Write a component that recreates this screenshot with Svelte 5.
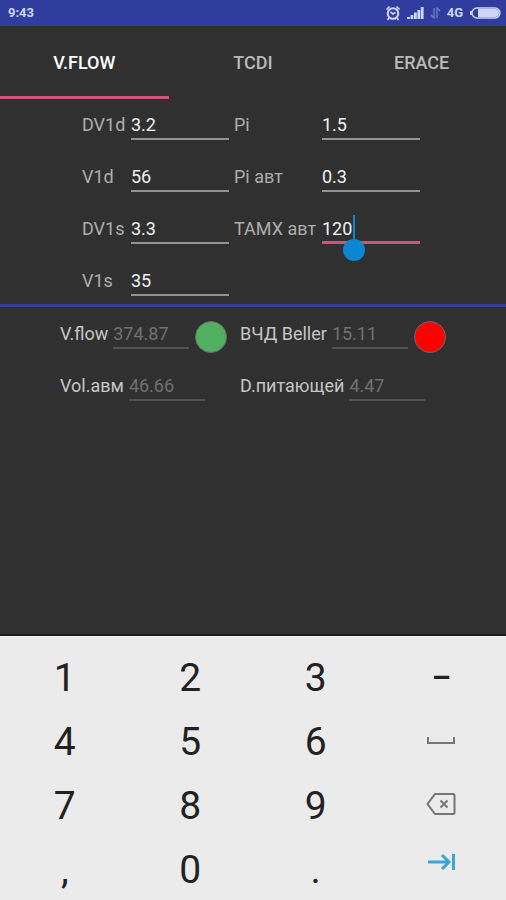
<script lang="ts">
	type Field = { id: string; label: string; value: string };
	type Result = Field & { status?: 'ok' | 'bad' };

	const tabs = ['V.FLOW', 'TCDI', 'ERACE'];

	const icons: Record<string, string> = {
		space: 'M2 10v6h26v-6',
		backspace: 'M9 3h18q1.5 0 1.5 1.5v17q0 1.5-1.5 1.5H9L1.5 13zM14.5 9.5l7 7M21.5 9.5l-7 7',
		next: 'M2 13h21M16 6l7 7-7 7M27.500 5v16'
	};

	const keys = ['1', '2', '3', '–', '4', '5', '6', 'space', '7', '8', '9', 'backspace', ',', '0', '.', 'next'];

	let activeTab = $state('V.FLOW');
	let activeField = $state('tamx');

	let fields: Field[] = $state([
		{ id: 'dv1d', label: 'DV1d', value: '3.2' },
		{ id: 'pi', label: 'Pi', value: '1.5' },
		{ id: 'v1d', label: 'V1d', value: '56' },
		{ id: 'pi-avt', label: 'Pi авт', value: '0.3' },
		{ id: 'dv1s', label: 'DV1s', value: '3.3' },
		{ id: 'tamx', label: 'TAMX авт', value: '120' },
		{ id: 'v1s', label: 'V1s', value: '35' }
	]);

	const results: Result[] = [
		{ id: 'vflow', label: 'V.flow', value: '374.87', status: 'ok' },
		{ id: 'beller', label: 'ВЧД Beller', value: '15.11', status: 'bad' },
		{ id: 'vol', label: 'Vol.авм', value: '46.66' },
		{ id: 'd-feed', label: 'D.питающей', value: '4.47' }
	];

	function press(key: string) {
		const index = fields.findIndex((f) => f.id === activeField);
		const field = fields[index];
		if (key === 'next') {
			activeField = fields[(index + 1) % fields.length].id;
		} else if (key === 'backspace') {
			field.value = field.value.slice(0, -1);
		} else {
			field.value += key === 'space' ? ' ' : key;
		}
	}
</script>

<div class="screen">
	<header class="status-bar">
		<span class="clock">9:43</span>
		<div class="status-icons">
			<svg width="16" height="16" viewBox="0 0 16 16" fill="none" stroke="currentColor" aria-hidden="true">
				<circle cx="8" cy="8.5" r="5.300" stroke-width="2" />
				<path d="M5.500 7l2.500 2 2.500-1.500M1.500 4.500l3-3M14.500 4.500l-3-3M4 13l-1.500 2M12 13l1.500 2" stroke-width="1.700" />
			</svg>
			<svg width="17" height="12" viewBox="0 0 17 12" fill="currentColor" aria-hidden="true">
				<path d="M0 10h3v2H0zM3.600 8h2.800v4H3.600zM7 5.500h2.800V12H7zM10.400 3h2.800v9h-2.800zM13.800 0h2.800v12h-2.800z" />
			</svg>
			<svg class="data" width="11" height="12" viewBox="0 0 11 12" fill="none" stroke="currentColor" aria-hidden="true">
				<path d="M4 1v10L1 8M7 11V1l3 3" stroke-width="1.400" />
			</svg>
			<span class="network">4G</span>
			<svg width="32" height="12" viewBox="0 0 32 12" aria-hidden="true">
				<rect x="3" y="1" width="28" height="10" rx="5" fill="none" stroke="currentColor" stroke-width="1.400" />
				<path d="M9 2h17a4 4 0 0 1 0 8H9z" fill="currentColor" />
				<path d="M2 4v4" stroke="currentColor" stroke-width="2" />
			</svg>
		</div>
	</header>

	<nav class="tabs">
		{#each tabs as tab}
			<button type="button" class="tab" class:active={activeTab === tab} onclick={() => (activeTab = tab)}>
				{tab}
			</button>
		{/each}
	</nav>

	<form class="fields">
		{#each fields as field (field.id)}
			<label for={field.id}>{field.label}</label>
			<div class="field" class:focused={activeField === field.id}>
				<input
					id={field.id}
					type="text"
					inputmode="none"
					bind:value={field.value}
					onfocus={() => (activeField = field.id)}
				/>
				{#if activeField === field.id}
					<div class="cursor" aria-hidden="true">
						<span class="ghost">{field.value}</span>
						<span class="caret"></span>
					</div>
				{/if}
			</div>
		{/each}
	</form>

	<section class="results">
		{#each results as result (result.id)}
			<div class="result">
				<label for={result.id}>{result.label}</label>
				<input id={result.id} type="text" value={result.value} disabled />
				{#if result.status}
					<span class="lamp {result.status}"></span>
				{/if}
			</div>
		{/each}
	</section>

	<div class="keypad">
		{#each keys as key}
			{#if icons[key]}
				<button type="button" class="key icon {key}" aria-label={key} onclick={() => press(key)}>
					<svg width="30" height="26" viewBox="0 0 30 26" fill="none" stroke="currentColor" aria-hidden="true">
						<path d={icons[key]} />
					</svg>
				</button>
			{:else}
				<button type="button" class="key" class:dash={key === '–'} onclick={() => press(key)}>{key}</button>
			{/if}
		{/each}
	</div>
</div>

<style>
	:global(body) {
		margin: 0;
		background: #303030;
	}

	.screen {
		display: flex;
		flex-direction: column;
		min-height: 100vh;
		background: #303030;
		font-family: Roboto, 'Noto Sans', sans-serif;
		font-size: 18px;
		line-height: 24px;
	}

	input,
	button {
		box-sizing: border-box;
		margin: 0;
		border: 0;
		padding: 0;
		border-radius: 0;
		background: none;
		color: inherit;
		font: inherit;
		outline: none;
	}

	button {
		cursor: pointer;
	}

	label {
		line-height: 26px;
	}

	.status-bar {
		display: flex;
		align-items: center;
		justify-content: space-between;
		height: 26px;
		padding: 0 5px 0 8px;
		background: #303d9f;
		color: #cdd6f6;
		font-size: 13px;
		font-weight: 700;
	}

	.status-icons {
		display: flex;
		align-items: center;
		gap: 6px;
	}

	.data {
		opacity: 0.4;
	}

	.tabs {
		display: grid;
		grid-template-columns: repeat(3, 1fr);
	}

	.tab {
		height: 73px;
		padding-top: 4px;
		border-bottom: 3px solid transparent;
		color: #b9b9b9;
		font-weight: 500;
	}

	.tab.active {
		border-bottom-color: #d2527c;
		color: #fff;
	}

	.fields {
		display: grid;
		grid-template-columns: 49px 103px 88px 98px;
		grid-auto-rows: 28px;
		row-gap: 24px;
		justify-content: center;
		padding: 13px 4px 8px 0;
		border-bottom: 3px solid #35408f;
		color: #adadad;
		white-space: nowrap;
	}

	.field {
		position: relative;
		width: 98px;
	}

	.field input {
		width: 100%;
		height: 28px;
		padding-bottom: 2px;
		border-bottom: 2px solid #949494;
		color: #f0f0f0;
	}

	.field.focused input {
		padding-bottom: 1px;
		border-bottom: 3px solid #d2527c;
		caret-color: transparent;
	}

	/* caret with its drag handle, placed after the typed text */
	.cursor {
		position: absolute;
		top: -1px;
		left: 0;
		display: flex;
		pointer-events: none;
	}

	.ghost {
		visibility: hidden;
	}

	.caret {
		position: relative;
		width: 2px;
		height: 28px;
		margin-left: 1px;
		background: #0b86d0;
	}

	.caret::after {
		content: '';
		position: absolute;
		top: 24px;
		left: -10px;
		width: 22px;
		height: 22px;
		border-radius: 50%;
		background: #0b86d0;
	}

	.results {
		display: grid;
		grid-template-columns: 180px 206px;
		grid-auto-rows: 28px;
		row-gap: 24px;
		justify-content: center;
		padding: 14px 0;
		color: #c6c6c6;
		white-space: nowrap;
	}

	.result {
		display: flex;
		align-items: flex-start;
	}

	.result input {
		width: 76px;
		height: 28px;
		margin: 0 6px 0 5px;
		padding-bottom: 2px;
		border-bottom: 2px solid #525252;
		color: #707070;
	}

	.lamp {
		box-sizing: border-box;
		width: 32px;
		height: 32px;
		border: 1px solid #6b6b6b;
		border-radius: 50%;
	}

	.lamp.ok {
		background: #50b060;
	}

	.lamp.bad {
		background: #ff0000;
	}

	.keypad {
		display: grid;
		grid-template-columns: repeat(4, 1fr);
		grid-auto-rows: 64px;
		margin-top: auto;
		padding: 8px 2px 0;
		border-top: 2px solid #1c1c1c;
		background: #ebebeb;
		color: #222;
	}

	.key {
		padding-top: 4px;
		font-size: 39px;
		line-height: 44px;
	}

	.key.dash {
		font-size: 30px;
		font-weight: 700;
	}

	.key.icon {
		display: flex;
		align-items: center;
		justify-content: center;
		padding: 0;
		color: #757575;
		stroke-width: 2;
	}

	.key.next {
		padding-bottom: 12px;
		color: #3fa5d5;
		stroke-width: 3;
	}
</style>
